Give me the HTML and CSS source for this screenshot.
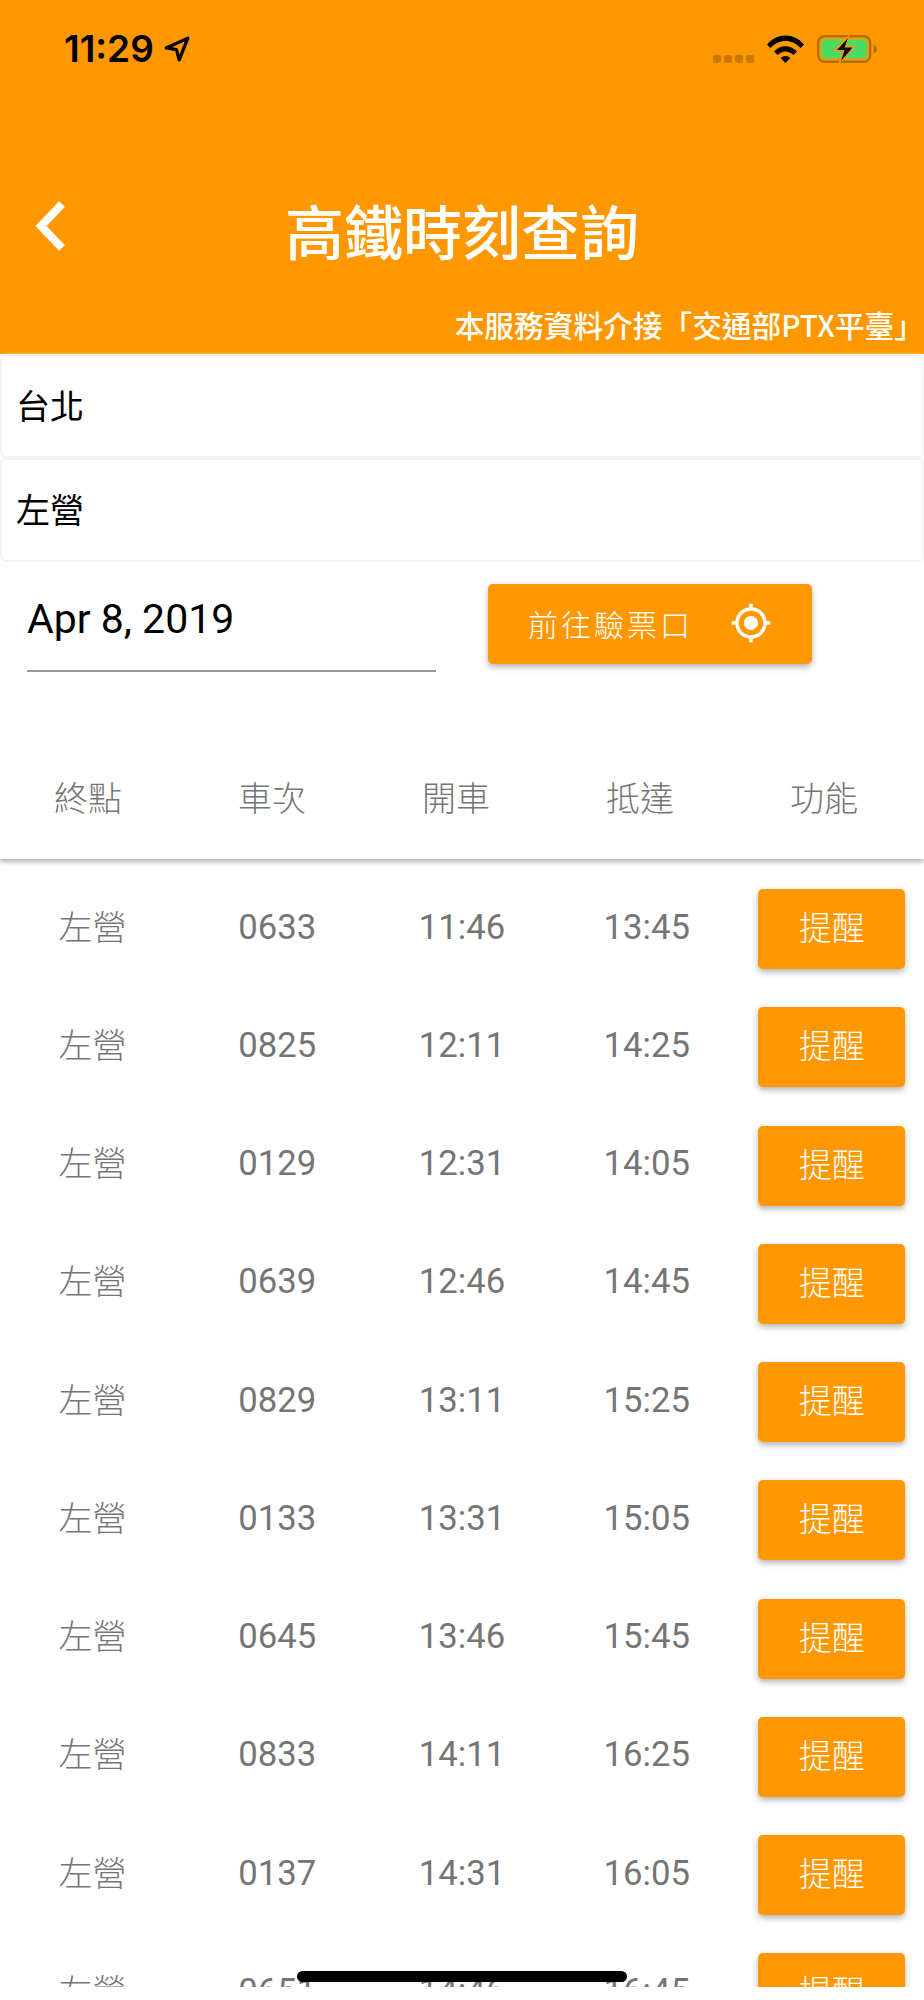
FILE: index.html
```html
<!DOCTYPE html>
<html lang="zh-Hant">
<head>
  <meta charset="UTF-8" />
  <title>高鐵時刻查詢</title>
  <link rel="stylesheet" href="styles.css">
</head>
<body>
  <header class="top">
    <div class="status">
      <div class="status-left">
        <span class="clock">11:29</span>
        <svg class="arrow" viewBox="0 0 24 24" width="26" height="26"><path d="M22 2 L2 11 L11.5 12.5 L14 22 Z" fill="none" stroke="#000" stroke-width="3" stroke-linejoin="round"/></svg>
      </div>
      <div class="status-right">
        <div class="signal"><i></i><i></i><i></i><i></i></div>
        <svg class="wifi" viewBox="0 0 37 28" width="37" height="28">
          <path d="M0 9.5 C10 -2.5 27 -2.5 37 9.5 L33.6 13 C25 3.6 12 3.6 3.4 13 Z" fill="#000"/>
          <path d="M7 16.5 C13.5 9.5 23.5 9.5 30 16.5 L26.4 20 C21.7 15.2 15.3 15.2 10.6 20 Z" fill="#000"/>
          <path d="M13.6 23 C16.5 20.2 20.5 20.2 23.4 23 L18.5 28 Z" fill="#000"/>
        </svg>
        <svg class="battery" viewBox="0 0 60 28" width="60" height="28">
          <rect x="1.2" y="1.2" width="52" height="25.6" rx="6.5" fill="none" stroke="#b06f00" stroke-width="2.4"/>
          <path d="M56.5 9.5 C59 10.5 60 12 60 14 C60 16 59 17.5 56.5 18.5 Z" fill="#b06f00"/>
          <rect x="4.5" y="4.5" width="45.5" height="19" rx="3.5" fill="#4cd964"/>
          <path d="M33 -1 L16 16 L25.5 16 L21 30 L39 11 L29 11 Z" fill="#ff9800"/>
          <path d="M31 3 L20 15 L27.5 15 L24 26 L35.5 12.5 L27.5 12.5 Z" fill="#000"/>
        </svg>
      </div>
    </div>
    <div class="title-row">
      <svg class="back" viewBox="0 0 32 52" width="32" height="52"><path d="M28 4 L7 26 L28 48" fill="none" stroke="#fff" stroke-width="8"/></svg>
      <h1>高鐵時刻查詢</h1>
    </div>
    <div class="source">本服務資料介接「交通部PTX平臺」</div>
  </header>

  <div class="card">台北</div>
  <div class="card">左營</div>

  <div class="form-row">
    <div class="date-field">Apr 8, 2019</div>
    <button class="gate-btn">
      <span>前往驗票口</span>
      <svg viewBox="0 0 24 24" width="42" height="42"><path fill="#fff" d="M12 8c-2.21 0-4 1.79-4 4s1.79 4 4 4 4-1.79 4-4-1.79-4-4-4zm8.94 3c-.46-4.17-3.77-7.48-7.94-7.94V1h-2v2.06C6.83 3.52 3.52 6.83 3.06 11H1v2h2.06c.46 4.17 3.77 7.48 7.94 7.94V23h2v-2.06c4.17-.46 7.48-3.77 7.94-7.94H23v-2h-2.06zM12 19c-3.87 0-7-3.13-7-7s3.13-7 7-7 7 3.13 7 7-3.13 7-7 7z"/></svg>
    </button>
  </div>

  <div class="table-head">
    <div>終點</div>
    <div>車次</div>
    <div>開車</div>
    <div>抵達</div>
    <div>功能</div>
  </div>

  <div class="table-body">
    <div class="row"><div>左營</div><div>0633</div><div>11:46</div><div>13:45</div><button class="remind-btn">提醒</button></div>
    <div class="row"><div>左營</div><div>0825</div><div>12:11</div><div>14:25</div><button class="remind-btn">提醒</button></div>
    <div class="row"><div>左營</div><div>0129</div><div>12:31</div><div>14:05</div><button class="remind-btn">提醒</button></div>
    <div class="row"><div>左營</div><div>0639</div><div>12:46</div><div>14:45</div><button class="remind-btn">提醒</button></div>
    <div class="row"><div>左營</div><div>0829</div><div>13:11</div><div>15:25</div><button class="remind-btn">提醒</button></div>
    <div class="row"><div>左營</div><div>0133</div><div>13:31</div><div>15:05</div><button class="remind-btn">提醒</button></div>
    <div class="row"><div>左營</div><div>0645</div><div>13:46</div><div>15:45</div><button class="remind-btn">提醒</button></div>
    <div class="row"><div>左營</div><div>0833</div><div>14:11</div><div>16:25</div><button class="remind-btn">提醒</button></div>
    <div class="row"><div>左營</div><div>0137</div><div>14:31</div><div>16:05</div><button class="remind-btn">提醒</button></div>
    <div class="row"><div>左營</div><div>0651</div><div>14:46</div><div>16:45</div><button class="remind-btn">提醒</button></div>
  </div>

  <div class="home-bar"></div>
</body>
</html>
```

FILE: styles.css
```css
* {
  box-sizing: border-box;
}

html,
body {
  height: 2000px;
}

body {
  margin: 0;
  position: relative;
  overflow: hidden;
  background-color: #fff;
  color: #000;
  font-family: Roboto, 'Noto Sans CJK TC', sans-serif;
}

.top {
  height: 354px;
  background-color: #ff9800;
  color: #fff;
}

/* Barre d'etat */
.status {
  height: 182px;
  padding: 35px 47px 0 64px;
  display: flex;
  justify-content: space-between;
  align-items: flex-start;
  color: #000;
}

.status-left {
  display: flex;
  align-items: center;
  gap: 10px;
  height: 28px;
}

.clock {
  font-family: Inter, sans-serif;
  font-size: 37px;
  font-weight: 600;
  line-height: 28px;
}

.status-right {
  display: flex;
  align-items: flex-end;
  gap: 13px;
}

.signal {
  display: flex;
  gap: 3px;
}

.signal i {
  width: 8px;
  height: 8px;
  border-radius: 2px;
  background-color: #c77a00;
}

.title-row {
  height: 96px;
  display: flex;
  align-items: center;
  justify-content: center;
  position: relative;
}

.back {
  position: absolute;
  left: 34px;
  top: 18px;
}

.title-row h1 {
  margin: 0;
  font-family: 'Noto Sans CJK TC', sans-serif;
  font-size: 59px;
  font-weight: 500;
  line-height: 64px;
}

.source {
  margin-top: 29px;
  text-align: right;
  font-family: 'Noto Sans CJK TC', sans-serif;
  font-size: 29.7px;
  font-weight: 500;
  line-height: 36px;
}

.card {
  height: 100px;
  margin: 2px 2px 4px;
  padding: 0 0 4px 14px;
  display: flex;
  align-items: center;
  font-family: 'Noto Sans CJK TC', sans-serif;
  font-size: 34px;
  background-color: #fff;
  border-radius: 4px;
  box-shadow: 0 0 2px 2px #f1f1f1;
}

.form-row {
  height: 103px;
  margin-top: 24px;
  display: flex;
  align-items: flex-start;
}

.date-field {
  width: 409px;
  height: 88px;
  margin-left: 27px;
  padding-top: 11px;
  font-size: 41px;
  line-height: 48px;
  border-bottom: 2px solid #999;
}

.gate-btn {
  width: 324px;
  height: 80px;
  margin-left: 52px;
  padding: 0 40px 2px;
  display: flex;
  align-items: center;
  justify-content: space-between;
  border: none;
  border-radius: 5px;
  background-color: #ff9800;
  color: #fff;
  font-family: 'Noto Sans CJK TC', sans-serif;
  font-size: 30px;
  font-weight: 300;
  letter-spacing: 3px;
  box-shadow: 0 3px 6px rgba(0, 0, 0, 0.3);
}

.table-head {
  height: 172px;
  padding: 88px 0 0 54px;
  display: grid;
  grid-template-columns: repeat(4, 184px) 1fr;
  position: relative;
  z-index: 1;
  background-color: #fff;
  font-family: 'Noto Sans CJK TC', sans-serif;
  font-size: 34px;
  font-weight: 300;
  line-height: 44px;
  color: #757575;
  box-shadow: 0 3px 5px rgba(0, 0, 0, 0.3);
  clip-path: inset(0 0 -12px 0);
}

.table-body {
  height: 1128px;
  padding-top: 11px;
  overflow: hidden;
}

.row {
  height: 118.25px;
  display: grid;
  grid-template-columns: repeat(5, 184.8px);
  align-items: center;
  text-align: center;
  font-size: 34.7px;
  color: #757575;
}

.row div {
  padding-bottom: 5px;
}

.row div:first-child {
  padding-bottom: 8px;
  font-family: 'Noto Sans CJK TC', sans-serif;
  font-size: 34px;
  font-weight: 300;
}

.remind-btn {
  width: 147px;
  height: 80px;
  margin-left: 19px;
  padding: 0 0 6px;
  border: none;
  border-radius: 5px;
  background-color: #ff9800;
  color: #fff;
  font-family: 'Noto Sans CJK TC', sans-serif;
  font-size: 33px;
  font-weight: 300;
  box-shadow: 0 3px 6px rgba(0, 0, 0, 0.3);
}

.home-bar {
  position: absolute;
  left: 297px;
  top: 1971px;
  width: 330px;
  height: 11px;
  border-radius: 6px;
  background-color: #000;
}
```
